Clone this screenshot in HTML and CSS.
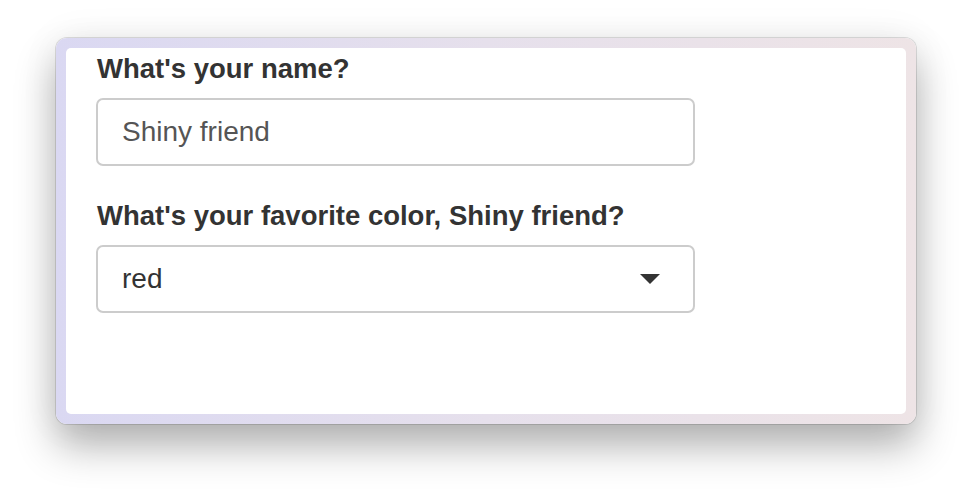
FILE: index.html
```html
<!DOCTYPE html>
<html>
<head>
<meta charset="utf-8">
<link rel="stylesheet" href="styles.css">
</head>
<body>
<div class="frame">
  <div class="panel">
    <div class="group">
      <label class="label">What's your name?</label>
      <div class="field"><span class="value muted">Shiny friend</span></div>
    </div>
    <div class="group">
      <label class="label">What's your favorite color, Shiny friend?</label>
      <div class="field select"><span class="value">red</span><span class="caret"></span></div>
    </div>
  </div>
</div>
</body>
</html>
```

FILE: styles.css
```css
html, body {
  margin: 0;
  padding: 0;
  background: #ffffff;
  font-family: "Liberation Sans", Arial, sans-serif;
}
body {
  padding: 38px 0 0 56px;
  min-height: 498px;
  box-sizing: border-box;
  overflow: hidden;
}
.frame {
  width: 860px;
  height: 386px;
  box-sizing: border-box;
  padding: 10px;
  border-radius: 11px;
  background: linear-gradient(90deg, #dad8f2 0%, #e6e0ec 50%, #eee4e6 100%);
  box-shadow: 0 0 0 1px rgba(0,0,0,0.12), 0 22px 40px rgba(0,0,0,0.3), 0 0 40px rgba(0,0,0,0.06);
}
.panel {
  height: 100%;
  background: #fff;
  border-radius: 5px;
  box-sizing: border-box;
  padding: 5px 0 0 30px;
  overflow: hidden;
}
.group {
  display: flex;
  flex-direction: column;
  margin-bottom: 34px;
}
.label {
  font-weight: bold;
  font-size: 27.5px;
  line-height: 32px;
  color: #333;
  margin-bottom: 13px;
  padding-left: 1px;
}
.field {
  width: 599px;
  height: 68px;
  box-sizing: border-box;
  border: 2px solid #cccccc;
  border-radius: 7px;
  display: flex;
  align-items: center;
  padding: 0 24px;
  font-size: 28px;
  color: #333;
}
.muted {
  color: #555;
}
.select {
  justify-content: space-between;
  padding-right: 33px;
}
.caret {
  width: 0;
  height: 0;
  border-left: 10px solid transparent;
  border-right: 10px solid transparent;
  border-top: 10px solid #333;
}
```
